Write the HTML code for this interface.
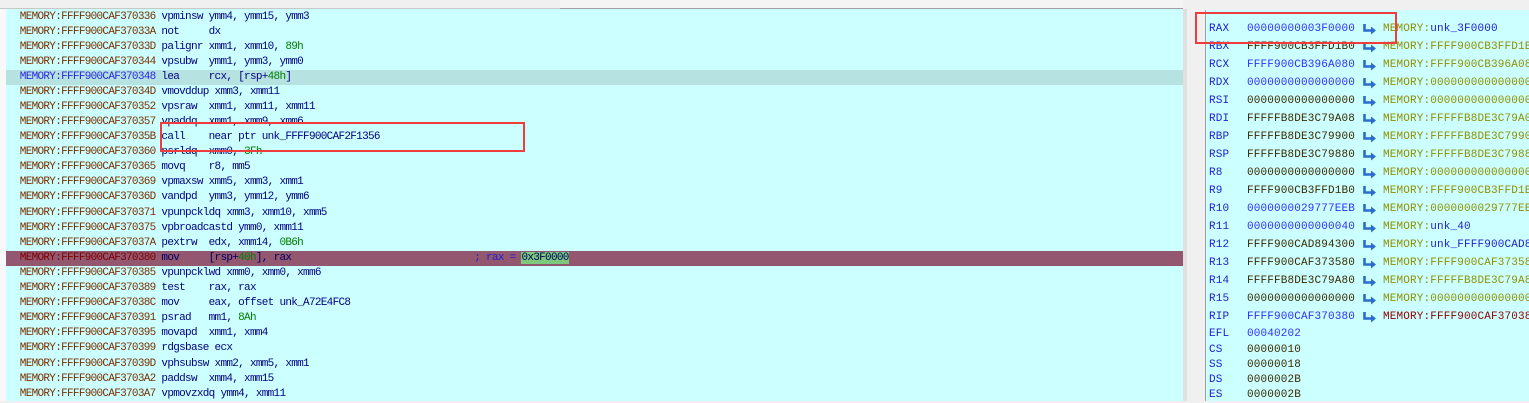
<!DOCTYPE html><html><head><style>
body{margin:0;width:1529px;height:401px;overflow:hidden;background:#f0f0f0;position:relative;font-family:"Liberation Mono","DejaVu Sans Mono",monospace;font-size:11px;letter-spacing:-0.7px}
.l{position:absolute;left:6px;top:9px;width:1177px;height:392px;background:#ccffff}
.row{position:absolute;left:0;width:1175px;padding-left:2px;height:15px;line-height:15px;white-space:pre;color:#000080}
.a{color:#7a3000}
.g{color:#008000}
.r{position:absolute;left:1205px;top:10px;width:324px;height:391px;background:#ccffff;border-left:1px solid #a0a0a0}
.rr{position:absolute;left:0;width:1529px;height:15px;line-height:15px;white-space:pre;letter-spacing:0.15px}
.rr span{position:absolute}
.k{color:#2020d0;left:1209px}.v{color:#3a2a00;left:1247px}.vb{color:#3030ff;left:1247px}.m{color:#909000;left:1383px}.mr{color:#900000;left:1383px}
.rr svg{position:absolute;left:1362px;top:2px}
.box{position:absolute;border:2px solid #f03c3c}
</style></head><body>
<svg width="0" height="0" style="position:absolute"><defs><g id="ar"><path d="M2.5 0 V6.5 H10" fill="none" stroke="#2a6cd0" stroke-width="2.6"/><path d="M9 2.5 L14 6.5 L9 10.5 Z" fill="#2a6cd0"/></g></defs></svg>
<div style="position:absolute;left:0;top:0;width:1183px;height:8px;background:#f0f0f0;border-bottom:1px solid #c8c8c8"></div>
<div style="position:absolute;left:0;top:9px;width:6px;height:392px;background:#f8f8f8;border-right:1px solid #d0d0d0"></div>
<div class="l">
<div class="row" style="top:1px"><span class="a">  MEMORY:FFFF900CAF370336</span> vpminsw ymm4, ymm15, ymm3</div>
<div class="row" style="top:16px"><span class="a">  MEMORY:FFFF900CAF37033A</span> not     dx</div>
<div class="row" style="top:31px"><span class="a">  MEMORY:FFFF900CAF37033D</span> palignr xmm1, xmm10, <span class="g">89h</span></div>
<div class="row" style="top:46px"><span class="a">  MEMORY:FFFF900CAF370344</span> vpsubw  ymm1, ymm3, ymm0</div>
<div class="row" style="top:61px;background:#b6e2e2;color:#000080"><span style="color:#2828e0">  MEMORY:FFFF900CAF370348</span> lea     rcx, [rsp+<span class="g">48h</span>]</div>
<div class="row" style="top:76px"><span class="a">  MEMORY:FFFF900CAF37034D</span> vmovddup xmm3, xmm11</div>
<div class="row" style="top:91px"><span class="a">  MEMORY:FFFF900CAF370352</span> vpsraw  xmm1, xmm11, xmm11</div>
<div class="row" style="top:106px"><span class="a">  MEMORY:FFFF900CAF370357</span> vpaddq  xmm1, xmm9, xmm6</div>
<div class="row" style="top:121px"><span class="a">  MEMORY:FFFF900CAF37035B</span> call    near ptr unk_FFFF900CAF2F1356</div>
<div class="row" style="top:136px"><span class="a">  MEMORY:FFFF900CAF370360</span> psrldq  xmm0, <span class="g">3Fh</span></div>
<div class="row" style="top:151px"><span class="a">  MEMORY:FFFF900CAF370365</span> movq    r8, mm5</div>
<div class="row" style="top:166px"><span class="a">  MEMORY:FFFF900CAF370369</span> vpmaxsw xmm5, xmm3, xmm1</div>
<div class="row" style="top:181px"><span class="a">  MEMORY:FFFF900CAF37036D</span> vandpd  ymm3, ymm12, ymm6</div>
<div class="row" style="top:197px"><span class="a">  MEMORY:FFFF900CAF370371</span> vpunpckldq xmm3, xmm10, xmm5</div>
<div class="row" style="top:212px"><span class="a">  MEMORY:FFFF900CAF370375</span> vpbroadcastd ymm0, xmm11</div>
<div class="row" style="top:227px"><span class="a">  MEMORY:FFFF900CAF37037A</span> pextrw  edx, xmm14, <span class="g">0B6h</span></div>
<div class="row" style="top:242px;background:#93586f;color:#000060"><span style="color:#800000">  MEMORY:FFFF900CAF370380</span> mov     [rsp+<span class="g">40h</span>], rax                               <span style="color:#2020d0">; rax = </span><span style="background:#7cc87c">0x3F0000</span></div>
<div class="row" style="top:257px"><span class="a">  MEMORY:FFFF900CAF370385</span> vpunpcklwd xmm0, xmm0, xmm6</div>
<div class="row" style="top:272px"><span class="a">  MEMORY:FFFF900CAF370389</span> test    rax, rax</div>
<div class="row" style="top:287px"><span class="a">  MEMORY:FFFF900CAF37038C</span> mov     eax, offset unk_A72E4FC8</div>
<div class="row" style="top:302px"><span class="a">  MEMORY:FFFF900CAF370391</span> psrad   mm1, <span class="g">8Ah</span></div>
<div class="row" style="top:317px"><span class="a">  MEMORY:FFFF900CAF370395</span> movapd  xmm1, xmm4</div>
<div class="row" style="top:332px"><span class="a">  MEMORY:FFFF900CAF370399</span> rdgsbase ecx</div>
<div class="row" style="top:348px"><span class="a">  MEMORY:FFFF900CAF37039D</span> vphsubsw xmm2, xmm5, xmm1</div>
<div class="row" style="top:363px"><span class="a">  MEMORY:FFFF900CAF3703A2</span> paddsw  xmm4, xmm15</div>
<div class="row" style="top:378px"><span class="a">  MEMORY:FFFF900CAF3703A7</span> vpmovzxdq ymm4, xmm11</div>
</div>
<div style="position:absolute;left:1183px;top:0;width:22px;height:401px;background:#f0f0f0"></div>
<div style="position:absolute;left:1183px;top:9px;width:4px;height:392px;background:#e0e0e0"></div>
<div class="r"></div>
<div style="position:absolute;left:560px;top:0;width:623px;height:8px;background:#f4f4f4;border-bottom:1px solid #a0a0a0"></div>
<div style="position:absolute;left:1197px;top:0;width:332px;height:8px;background:#f0f0f0"></div>
<div class="rr" style="top:22px"><span class="k">RAX</span><span class="vb">00000000003F0000</span><svg width="15" height="11"><use href="#ar"/></svg><span class="m">MEMORY:<b style="font-weight:normal;color:#2020d0">unk_3F0000</b></span></div>
<div class="rr" style="top:40px"><span class="k">RBX</span><span class="v">FFFF900CB3FFD1B0</span><svg width="15" height="11"><use href="#ar"/></svg><span class="m">MEMORY:FFFF900CB3FFD1B0</span></div>
<div class="rr" style="top:58px"><span class="k">RCX</span><span class="vb">FFFF900CB396A080</span><svg width="15" height="11"><use href="#ar"/></svg><span class="m">MEMORY:FFFF900CB396A080</span></div>
<div class="rr" style="top:76px"><span class="k">RDX</span><span class="vb">0000000000000000</span><svg width="15" height="11"><use href="#ar"/></svg><span class="m">MEMORY:0000000000000000</span></div>
<div class="rr" style="top:94px"><span class="k">RSI</span><span class="v">0000000000000000</span><svg width="15" height="11"><use href="#ar"/></svg><span class="m">MEMORY:0000000000000000</span></div>
<div class="rr" style="top:112px"><span class="k">RDI</span><span class="v">FFFFFB8DE3C79A08</span><svg width="15" height="11"><use href="#ar"/></svg><span class="m">MEMORY:FFFFFB8DE3C79A08</span></div>
<div class="rr" style="top:130px"><span class="k">RBP</span><span class="v">FFFFFB8DE3C79900</span><svg width="15" height="11"><use href="#ar"/></svg><span class="m">MEMORY:FFFFFB8DE3C79900</span></div>
<div class="rr" style="top:148px"><span class="k">RSP</span><span class="v">FFFFFB8DE3C79880</span><svg width="15" height="11"><use href="#ar"/></svg><span class="m">MEMORY:FFFFFB8DE3C79880</span></div>
<div class="rr" style="top:166px"><span class="k">R8</span><span class="v">0000000000000000</span><svg width="15" height="11"><use href="#ar"/></svg><span class="m">MEMORY:0000000000000000</span></div>
<div class="rr" style="top:184px"><span class="k">R9</span><span class="v">FFFF900CB3FFD1B0</span><svg width="15" height="11"><use href="#ar"/></svg><span class="m">MEMORY:FFFF900CB3FFD1B0</span></div>
<div class="rr" style="top:202px"><span class="k">R10</span><span class="vb">0000000029777EEB</span><svg width="15" height="11"><use href="#ar"/></svg><span class="m">MEMORY:0000000029777EEB</span></div>
<div class="rr" style="top:220px"><span class="k">R11</span><span class="vb">0000000000000040</span><svg width="15" height="11"><use href="#ar"/></svg><span class="m">MEMORY:<b style="font-weight:normal;color:#2020d0">unk_40</b></span></div>
<div class="rr" style="top:238px"><span class="k">R12</span><span class="v">FFFF900CAD894300</span><svg width="15" height="11"><use href="#ar"/></svg><span class="m">MEMORY:<b style="font-weight:normal;color:#2020d0">unk_FFFF900CAD894300</b></span></div>
<div class="rr" style="top:256px"><span class="k">R13</span><span class="v">FFFF900CAF373580</span><svg width="15" height="11"><use href="#ar"/></svg><span class="m">MEMORY:FFFF900CAF373580</span></div>
<div class="rr" style="top:274px"><span class="k">R14</span><span class="v">FFFFFB8DE3C79A80</span><svg width="15" height="11"><use href="#ar"/></svg><span class="m">MEMORY:FFFFFB8DE3C79A80</span></div>
<div class="rr" style="top:292px"><span class="k">R15</span><span class="v">0000000000000000</span><svg width="15" height="11"><use href="#ar"/></svg><span class="m">MEMORY:0000000000000000</span></div>
<div class="rr" style="top:310px"><span class="k">RIP</span><span class="vb">FFFF900CAF370380</span><svg width="15" height="11"><use href="#ar"/></svg><span class="mr">MEMORY:FFFF900CAF370380</span></div>
<div class="rr" style="top:327px"><span class="k">EFL</span><span class="vb">00040202</span></div>
<div class="rr" style="top:343px"><span class="k">CS</span><span class="v">00000010</span></div>
<div class="rr" style="top:358px"><span class="k">SS</span><span class="v">00000018</span></div>
<div class="rr" style="top:373px"><span class="k">DS</span><span class="v">0000002B</span></div>
<div class="rr" style="top:388px"><span class="k">ES</span><span class="v">0000002B</span></div>
<div class="box" style="left:160px;top:122px;width:361px;height:26px"></div>
<div class="box" style="left:1195px;top:12px;width:198px;height:28px"></div>
</body></html>
